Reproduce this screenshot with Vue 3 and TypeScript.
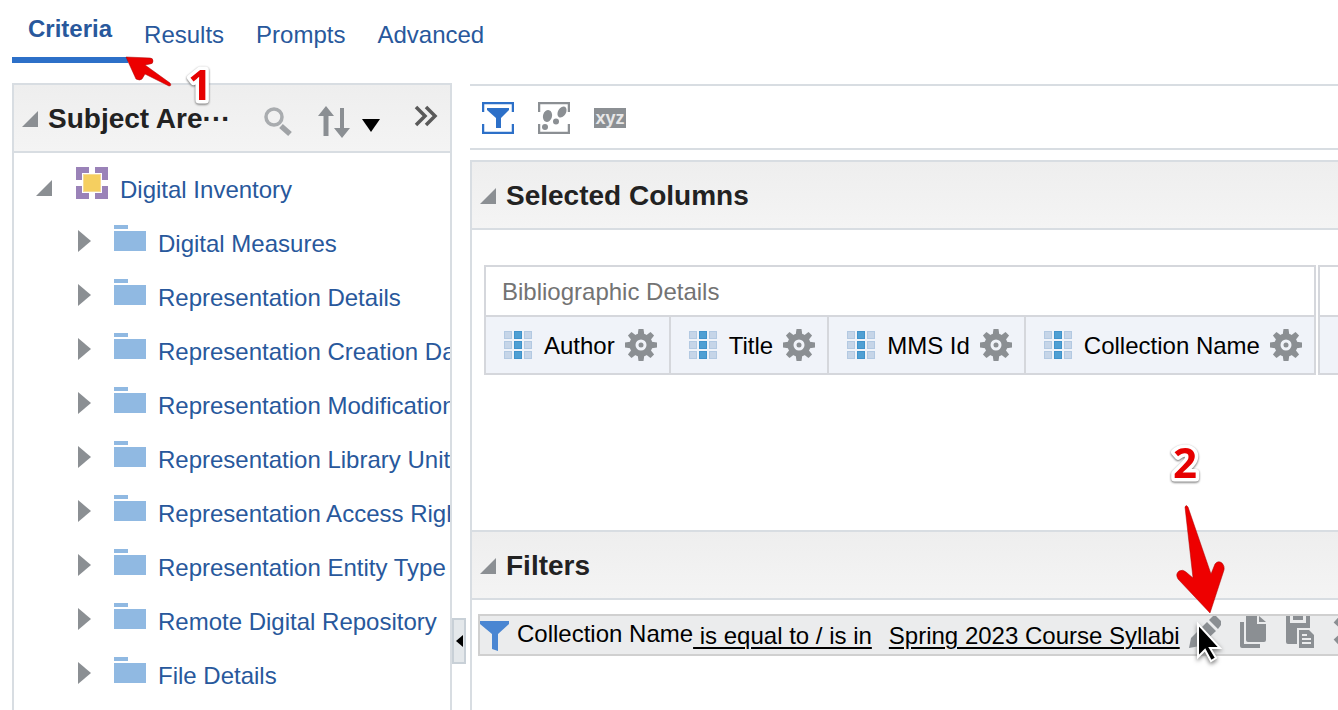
<script setup lang="ts">
const tabs = ['Criteria', 'Results', 'Prompts', 'Advanced']

const folders = [
  'Digital Measures',
  'Representation Details',
  'Representation Creation Date',
  'Representation Modification Date',
  'Representation Library Unit',
  'Representation Access Rights',
  'Representation Entity Type',
  'Remote Digital Repository',
  'File Details',
]

const columns = ['Author', 'Title', 'MMS Id', 'Collection Name']

const cells = [0, 1, 2].flatMap((row) => [0, 1, 2].map((col) => ({ row, col })))
const teeth = [0, 45, 90, 135, 180, 225, 270, 315]
</script>

<template>
  <div class="page">
    <nav class="tabs" aria-label="Analysis views">
      <a v-for="(tab, i) in tabs" :key="tab" href="#" class="tab" :class="{ active: i === 0 }">{{ tab }}</a>
    </nav>

    <div class="workspace">
      <aside class="sidebar">
        <header class="head side-head">
          <button class="twisty" aria-label="Collapse Subject Areas">
            <svg width="16" height="16" viewBox="0 0 16 16"><path d="M0 16 16 0V16Z" fill="#8b8f93" /></svg>
          </button>
          <h2 class="side-title">Subject Are···</h2>
          <div class="side-tools">
            <button aria-label="Search">
              <svg width="28" height="30" viewBox="0 0 28 30">
                <circle cx="10" cy="10" r="8" fill="none" stroke="#a9acaf" stroke-width="3.500" />
                <path d="m17 19 9 8" stroke="#a0a3a6" stroke-width="5.500" />
              </svg>
            </button>
            <button class="sort" aria-label="Sort">
              <svg width="64" height="32" viewBox="0 0 64 32">
                <path d="M8 0 16 10H10.500V30H5.500V10H0Z" fill="#8b8f93" />
                <path d="M24 32 16 22H22V2H26V22H32Z" fill="#8b8f93" />
                <path d="M44 13H62L53 26Z" fill="#000" />
              </svg>
            </button>
            <button class="more" aria-label="More">
              <svg width="24" height="22" viewBox="0 0 24 22">
                <path d="m2 2 9 9-9 9M12 2l9 9-9 9" fill="none" stroke="#5a5a5a" stroke-width="3.500" />
              </svg>
            </button>
          </div>
        </header>

        <ul class="tree">
          <li class="row root">
            <button class="twisty" aria-label="Collapse Digital Inventory">
              <svg width="16" height="16" viewBox="0 0 16 16"><path d="M0 16 16 0V16Z" fill="#8b8f93" /></svg>
            </button>
            <svg class="area-icon" width="32" height="32" viewBox="0 0 32 32">
              <path d="M0 0H13V6H6V13H0ZM19 0H32V13H26V6H19ZM0 19H6V26H13V32H0ZM26 19H32V32H19V26H26Z" fill="#9a82b8" />
              <rect x="7" y="7" width="18" height="18" fill="#f5dc96" />
              <rect x="8" y="8" width="16" height="16" fill="#f5cf60" />
            </svg>
            <a href="#">Digital Inventory</a>
          </li>
          <li v-for="folder in folders" :key="folder" class="row child">
            <button class="twisty" :aria-label="`Expand ${folder}`">
              <svg width="13" height="22" viewBox="0 0 13 22"><path d="M0 0 13 11 0 22Z" fill="#8b8f93" /></svg>
            </button>
            <svg class="folder-icon" width="32" height="26" viewBox="0 0 32 26">
              <path d="M0 0H14V4H0ZM0 6H32V26H0Z" fill="#90b9e2" />
            </svg>
            <a href="#">{{ folder }}</a>
          </li>
        </ul>
      </aside>

      <div class="splitter">
        <button class="splitter-grip" aria-label="Collapse pane">
          <svg width="7" height="12" viewBox="0 0 7 12"><path d="M7 0V12L0 6Z" fill="#000" /></svg>
        </button>
      </div>

      <main class="editor">
        <div class="toolbar">
          <button aria-label="Show filters pane">
            <svg width="32" height="32" viewBox="0 0 32 32">
              <path d="M1 10V1H31V10M1 22V31H31V22" fill="none" stroke="#2d70c8" stroke-width="2.500" />
              <path d="M5 6H27V8L19 16V26H14V16L5 8Z" fill="#2d70c8" />
            </svg>
          </button>
          <button aria-label="Show selection steps pane">
            <svg width="32" height="32" viewBox="0 0 32 32">
              <path d="M1 10V1H31V10M1 22V31H31V22" fill="none" stroke="#8b8f93" stroke-width="2.500" />
              <g fill="#8b8f93">
                <ellipse cx="9.500" cy="14" rx="4.500" ry="6" transform="rotate(15 9.500 14)" />
                <ellipse cx="7" cy="25" rx="3" ry="3" />
                <ellipse cx="24" cy="10" rx="4" ry="6" transform="rotate(30 24 10)" />
                <ellipse cx="18" cy="19.500" rx="3" ry="3" />
              </g>
            </svg>
          </button>
          <button class="xyz" aria-label="Edit formula xyz">xyz</button>
        </div>

        <section class="panel">
          <header class="head">
            <button class="twisty" aria-label="Collapse Selected Columns">
              <svg width="16" height="16" viewBox="0 0 16 16"><path d="M0 16 16 0V16Z" fill="#8b8f93" /></svg>
            </button>
            <h2>Selected Columns</h2>
          </header>
          <div class="columns">
            <div class="group">
              <div class="group-title">Bibliographic Details</div>
              <div class="group-columns">
                <div v-for="column in columns" :key="column" class="column">
                  <svg width="28" height="28" viewBox="0 0 28 28">
                    <template v-for="cell in cells" :key="`${cell.row}-${cell.col}`">
                      <rect
                        :x="cell.col * 10 + 0.5"
                        :y="cell.row * 10 + 0.5"
                        width="7"
                        height="7"
                        :fill="cell.col === 1 ? '#4f9fd3' : '#c6d5e8'"
                        :stroke="cell.col === 1 ? '#3f92cb' : '#b3c9e2'"
                      />
                    </template>
                  </svg>
                  <span class="column-name">{{ column }}</span>
                  <button :aria-label="`${column} options`">
                    <svg width="32" height="32" viewBox="0 0 32 32">
                      <path
                        v-for="angle in teeth"
                        :key="angle"
                        d="M12.500 7 13.500 0H18.500L19.500 7Z"
                        :transform="`rotate(${angle} 16 16)`"
                        fill="#8b8f93"
                      />
                      <circle cx="16" cy="16" r="8.500" fill="none" stroke="#8b8f93" stroke-width="6" />
                      <circle cx="16" cy="16" r="2.500" fill="#8b8f93" />
                    </svg>
                  </button>
                </div>
              </div>
            </div>
            <div class="group next-group">
              <div class="group-title"></div>
              <div class="group-columns"></div>
            </div>
          </div>
        </section>

        <section class="panel filters">
          <header class="head">
            <button class="twisty" aria-label="Collapse Filters">
              <svg width="16" height="16" viewBox="0 0 16 16"><path d="M0 16 16 0V16Z" fill="#8b8f93" /></svg>
            </button>
            <h2>Filters</h2>
          </header>
          <div class="filter">
            <svg class="funnel" width="29" height="30" viewBox="0 0 29 30">
              <path d="M0 0H29V3L18 13V30L12 28V13L0 3Z" fill="#4a86d2" />
            </svg>
            <span class="filter-name">Collection Name</span>
            <a href="#" class="operator">&nbsp;is equal to / is in</a>
            <a href="#" class="value">Spring 2023 Course Syllabi</a>
            <div class="filter-tools">
              <button aria-label="Edit filter">
                <svg width="32" height="32" viewBox="0 0 32 32">
                  <path d="M0 32 2 22 18 6 27 15 11 30ZM20 4 24 0H27L32 5V9L29 13Z" fill="#8b8f93" />
                </svg>
              </button>
              <button aria-label="Copy filter">
                <svg width="32" height="32" viewBox="0 0 32 32">
                  <path d="M9 0H20V8H29V24Q29 26 27 26H11Q9 26 9 24ZM22 0 29 6H22Z" fill="#8b8f93" />
                  <path d="M3 6H7V28H23V32H5Q3 32 3 30Z" fill="#8b8f93" />
                </svg>
              </button>
              <button aria-label="Paste filter">
                <svg width="32" height="32" viewBox="0 0 32 32">
                  <path d="M1 0H5V7H21V0H25V12H12V28H3Q1 28 1 26ZM8 0H18V4H8Z" fill="#8b8f93" />
                  <path d="M14 14H24L29 19V32H14Z" fill="#8b8f93" />
                  <path d="M17 19H22M17 23H26M17 27H26" stroke="#ebeced" stroke-width="2" />
                </svg>
              </button>
              <button aria-label="Remove filter">
                <svg width="32" height="32" viewBox="0 0 32 32">
                  <path d="m3 4 24 22M27 4 3 26" stroke="#8b8f93" stroke-width="7" />
                </svg>
              </button>
            </div>
          </div>
        </section>
      </main>
    </div>

    <svg class="callout first" width="100" height="60" viewBox="0 0 100 60">
      <path d="M4 5 28 6Q31 6 31 9 31 12 28 12L23 13 48 31Q50 34 47 34L23 22 20 27Q18 29 14 27Z" fill="#ec0000" stroke="#a80000" stroke-width="0.500" />
      <text x="66" y="48" class="digit">1</text>
    </svg>
    <svg class="callout second" width="70" height="220" viewBox="0 0 70 220">
      <text x="13" y="38" class="digit">2</text>
      <path d="M25 67Q26 64 28 67L51 134 55 124Q58 120 62 123 65 126 64 130L50 173 18 139Q15 134 19 131 23 129 26 132L33 138Z" fill="#ee0000" stroke="#a80000" stroke-width="0.500" />
      <path class="pointer" d="M38 184V217L45 210 51 221 56 218 50 208H60Z" fill="#000" stroke="#fff" stroke-width="2" />
    </svg>
  </div>
</template>

<style>
body {
  margin: 0;
  background: #fff;
}
</style>

<style scoped>
.page {
  position: relative;
  display: flex;
  flex-direction: column;
  height: 100vh;
  overflow: hidden;
  font-family: "Liberation Sans", Arial, sans-serif;
  font-size: 24px;
  line-height: 28px;
  color: #000;
}
button {
  display: flex;
  flex: none;
  margin: 0;
  padding: 0;
  border: 0;
  background: none;
  font: inherit;
  cursor: pointer;
}
svg {
  display: block;
  flex: none;
}
a {
  color: #28589c;
  text-decoration: none;
  white-space: nowrap;
}
h2 {
  margin: 0;
  font-size: 28px;
  line-height: 32px;
  color: #222;
  white-space: nowrap;
}
.tabs {
  display: flex;
  flex: none;
  height: 63px;
  padding-left: 12px;
}
.tab {
  box-sizing: border-box;
  padding: 21px 16px 0;
}
.tab.active {
  padding-top: 15px;
  border-bottom: 6px solid #2d70c8;
  font-weight: bold;
}
.workspace {
  display: flex;
  flex: 1;
  min-height: 0;
  padding: 20px 0 0 12px;
}
.sidebar {
  box-sizing: border-box;
  flex: none;
  width: 440px;
  border: 2px solid #d8dde2;
  border-bottom: 0;
  overflow: hidden;
}
.head {
  display: flex;
  box-sizing: border-box;
  align-items: center;
  gap: 10px;
  height: 68px;
  padding: 2px 0 0 8px;
  border-bottom: 2px solid #d8dde2;
  background: linear-gradient(#eeeeee, #f4f4f4);
}
.side-title {
  flex: 1;
}
.side-tools {
  display: flex;
  align-items: center;
  padding: 6px 12px 0 0;
}
.sort {
  margin-left: 26px;
}
.more {
  margin: 0 0 12px 32px;
}
.tree {
  margin: 0;
  padding: 10px 0 0;
  list-style: none;
}
.row {
  display: flex;
  align-items: center;
  height: 54px;
}
.root {
  padding-left: 22px;
}
.root .twisty {
  padding-bottom: 4px;
}
.area-icon {
  margin: 0 12px 14px 24px;
}
.child {
  padding-left: 64px;
}
.child .twisty {
  padding-bottom: 6px;
}
.folder-icon {
  margin: 0 12px 12px 23px;
}
.splitter {
  display: flex;
  flex: none;
  align-items: flex-end;
  width: 18px;
}
.splitter-grip {
  box-sizing: border-box;
  align-items: center;
  justify-content: center;
  width: 14px;
  height: 46px;
  margin-bottom: 46px;
  border: 2px solid #c8d0d7;
  background: #e4e8eb;
}
.editor {
  display: flex;
  flex: 1;
  flex-direction: column;
  min-width: 0;
  padding-top: 1px;
  overflow: hidden;
}
.toolbar {
  display: flex;
  flex: none;
  align-items: center;
  gap: 24px;
  height: 62px;
  margin-bottom: 10px;
  padding: 2px 12px 0;
  box-sizing: border-box;
  height: 66px;
  border: solid #d8dde2;
  border-width: 2px 0;
}
.xyz {
  align-items: center;
  justify-content: center;
  width: 32px;
  height: 20px;
  background: #8b8f93;
  color: #e8e8e8;
  font-size: 18px;
  font-weight: bold;
  line-height: 18px;
}
.panel {
  flex: 1 1 0;
  border: solid #d8dde2;
  border-width: 2px 0 0 2px;
}
.columns {
  display: flex;
  gap: 2px;
  padding: 35px 0 0 12px;
}
.group {
  flex: none;
  border: 2px solid #d5d7dc;
}
.group-title {
  height: 48px;
  padding-left: 16px;
  border-bottom: 2px solid #d5d7dc;
  line-height: 50px;
  color: #737373;
}
.group-columns {
  display: flex;
  height: 56px;
  background: #f0f3f9;
}
.next-group {
  width: 240px;
}
.column {
  display: flex;
  align-items: center;
  padding: 0 12px 0 18px;
}
.column + .column {
  border-left: 2px solid #d5d7dc;
}
.column-name {
  margin: 0 10px 0 12px;
  padding-top: 2px;
  white-space: nowrap;
}
.panel.filters {
  flex: none;
  height: 178px;
}
.filter {
  display: flex;
  box-sizing: border-box;
  height: 42px;
  margin: 14px 0 0 6px;
  border: 2px solid #d0d0d0;
  border-right: 0;
  background: #ebeced;
}
.funnel {
  margin: 5px 8px 0 0;
}
.filter-name {
  flex: none;
  margin-top: 4px;
}
.operator,
.value {
  flex: none;
  margin-top: 6px;
  color: #000;
  text-decoration: underline;
  text-decoration-thickness: 2px;
  text-underline-offset: 3px;
}
.value {
  margin-left: 17px;
}
.filter-tools {
  display: flex;
  flex: none;
  gap: 16px;
  margin-left: 9px;
}
.callout {
  position: absolute;
  pointer-events: none;
  overflow: visible;
}
.first {
  top: 52px;
  left: 122px;
}
.second {
  top: 440px;
  left: 1160px;
}
.digit {
  font-family: "Open Sans", "Noto Sans", sans-serif;
  font-size: 42px;
  font-weight: bold;
  fill: #e60000;
  stroke: #fff;
  stroke-width: 7px;
  stroke-linejoin: round;
  paint-order: stroke;
  filter: drop-shadow(0 1px 1px #666);
}
.pointer {
  filter: drop-shadow(0 2px 2px #777);
}
</style>
